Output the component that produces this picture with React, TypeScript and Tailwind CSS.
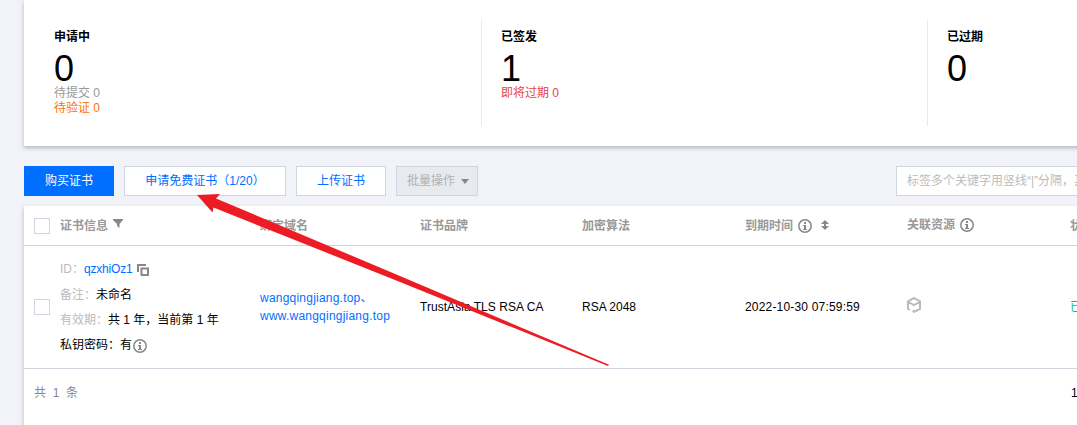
import React from "react";

function Info({ className = "" }: { className?: string }) {
  return (
    <svg className={"shrink-0 " + className} width="14" height="14" viewBox="0 0 14 14" fill="none">
      <circle cx="7" cy="7" r="6.2" stroke="#888" strokeWidth="1.5" />
      <path d="M6 3h2v2H6zM5 6h3v4h1v1H5v-1h1V7H5z" fill="#888" />
    </svg>
  );
}

function Checkbox() {
  return <span className="block h-4 w-4 shrink-0 border border-[#cfd5de] bg-white" />;
}

function Stat({ title, value, children }: { title: string; value: string; children?: React.ReactNode }) {
  return (
    <div className="w-[446px] shrink-0 pl-5">
      <div className="pt-[11px] font-bold leading-[15px] text-black">{title}</div>
      <div className="mt-[7px] text-[36px] leading-[34px] text-black">{value}</div>
      <div className="leading-[15px]">{children}</div>
    </div>
  );
}

const cols = "grid grid-cols-[26px_200px_160px_162px_163px_162px_163px_200px] pl-[10px]";

export default function App() {
  return (
    <div className="relative h-[425px] w-[1077px] overflow-hidden bg-[#f2f3f8] pl-6 font-['Liberation_Sans','Noto_Sans_CJK_SC',sans-serif] text-[12px] whitespace-nowrap text-black">
      <section className="flex h-[146px] w-[1400px] bg-white pt-[19px] pl-[10px] shadow-[0_2px_4px_rgba(54,58,80,0.32)]">
        <Stat title="申请中" value="0">
          <div className="text-[#999]">待提交 0</div>
          <div className="text-[#ff7200]">待验证 0</div>
        </Stat>
        <div className="-mr-px ml-px h-[107px] w-px bg-[#e7eaef]" />
        <Stat title="已签发" value="1">
          <div className="text-[#e54545]">即将过期 0</div>
        </Stat>
        <div className="-mr-px h-[107px] w-px bg-[#e7eaef]" />
        <Stat title="已过期" value="0" />
      </section>

      <div className="mt-5 flex h-[30px] w-[1400px] items-stretch leading-[29px]">
        <button className="w-[90px] border border-[#006eff] bg-[#006eff] text-white">购买证书</button>
        <button className="ml-[10px] w-[162px] border border-[#cfd5de] bg-white text-[#006eff]">申请免费证书（1/20）</button>
        <button className="ml-[10px] w-[90px] border border-[#cfd5de] bg-white text-[#006eff]">上传证书</button>
        <button className="ml-[10px] flex w-[82px] items-center border border-[#cfd5de] bg-[#e7eaef] pl-[10px] text-[#b2b2b2]">
          批量操作
          <svg className="ml-[6px] mt-px" width="8" height="5" viewBox="0 0 8 5"><path d="M0 0h8L4 5z" fill="#888" /></svg>
        </button>
        <div className="ml-[418px] w-[300px] border border-[#cfd5de] bg-white pl-[10px] text-[#bbb]">标签多个关键字用竖线“|”分隔，其他过滤标签用回车键分隔</div>
      </div>

      <section className="mt-[10px] h-[300px] w-[1400px] bg-white shadow-[0_2px_4px_rgba(54,58,80,0.32)]">
        <div className={cols + " h-10 items-center border-b border-[#cfd5de] font-bold text-[#999]"}>
          <Checkbox />
          <div className="flex items-center">
            证书信息
            <svg className="mb-[3px] ml-[5px]" width="10" height="10" viewBox="0 0 10 10"><path d="M0 0h10v1L6.5 5v4L4 7V5L0 1z" fill="#888" /></svg>
          </div>
          <div>绑定域名</div>
          <div>证书品牌</div>
          <div>加密算法</div>
          <div className="flex items-center">到期时间<Info className="ml-[5px]" />
            <svg className="mb-px ml-[9px]" width="8" height="10" viewBox="0 0 8 10"><path d="M4 0l4 4H5v2h3L4 10 0 6h3V4H0z" fill="#888" /></svg>
          </div>
          <div className="flex items-center pb-px">关联资源<Info className="ml-[5px]" /></div>
          <div>状态</div>
        </div>
        <div className={cols + " h-[123px] items-center border-b border-[#cfd5de]"}>
          <Checkbox />
          <div className="flex flex-col pt-px leading-[25px]">
            <div className="flex items-center"><span className="text-[#bbb]">ID：</span><span className="tracking-[-0.2px] text-[#006eff]">qzxhiOz1</span>
              <svg className="ml-[5px]" width="12" height="12" viewBox="0 0 12 12" fill="none" stroke="#888" strokeWidth="2"><path d="M1 8V1h8M4.5 4.5H11V11H4.5z" /></svg>
            </div>
            <div className="pt-px leading-6"><span className="text-[#bbb]">备注：</span>未命名</div>
            <div className="pt-px"><span className="text-[#bbb]">有效期：</span>共 1 年，当前第 1 年</div>
            <div className="flex items-center">私钥密码：有<Info className="ml-px" /></div>
          </div>
          <div className="leading-[18px] tracking-[0.22px] text-[#006eff]">wangqingjiang.top、<br />www.wangqingjiang.top</div>
          <div className="tracking-[0.04px]">TrustAsia TLS RSA CA</div>
          <div>RSA 2048</div>
          <div className="tracking-[0.18px]">2022-10-30 07:59:59</div>
          <div className="pb-[5px]">
            <svg width="14" height="16" viewBox="0 0 14 16" fill="none" stroke="#bbb" strokeWidth="2"><path d="M3 13L1 11.8V4.3L7 1l6 3.3v7.5L8 14.5M1.5 5L7 8.2 12.500 5" /><circle cx="7" cy="14.200" r="1.500" fill="#bbb" stroke="none" /></svg>
          </div>
          <div className="text-[#0abf5b]">已签发</div>
        </div>
        <div className="flex h-[48px] items-center pl-[10px] text-[#888]">
          <span className="w-[1037px]">共&nbsp; 1&nbsp; 条</span><span className="text-black">10</span>
        </div>
      </section>

      <svg className="pointer-events-none absolute left-0 top-0" width="1077" height="425" viewBox="0 0 1077 425">
        <path d="M197 195L220 194L216 198.500L400 276L609 364.800L608 366L400 282L213.500 207.500L212.500 212.500Z" fill="#ed1c24" />
      </svg>
    </div>
  );
}
